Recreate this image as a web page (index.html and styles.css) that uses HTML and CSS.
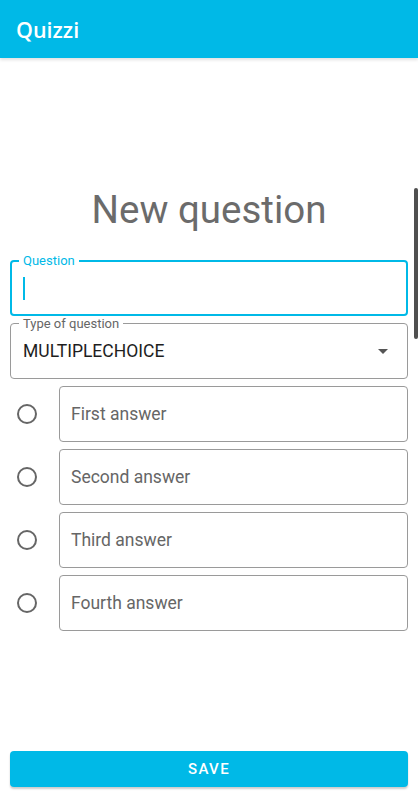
FILE: index.html
```html
<!DOCTYPE html>
<html lang="en">
<head>
  <meta charset="UTF-8" />
  <meta name="viewport" content="width=device-width, initial-scale=1.0" />
  <title>Quizzi</title>
  <link rel="stylesheet" href="styles.css">
</head>
<body>
  <header class="appbar">Quizzi</header>
  <div class="scroll-thumb"></div>

  <main class="content">
    <h1 class="title">New question</h1>

    <div class="field field-focused">
      <span class="field-label">Question</span>
      <span class="cursor"></span>
    </div>

    <div class="field">
      <span class="field-label">Type of question</span>
      <span class="field-value">MULTIPLECHOICE</span>
      <span class="dropdown-arrow"></span>
    </div>

    <div class="answers">
      <div class="answer-row">
        <span class="radio"></span>
        <div class="field answer"><span class="placeholder">First answer</span></div>
      </div>
      <div class="answer-row">
        <span class="radio"></span>
        <div class="field answer"><span class="placeholder">Second answer</span></div>
      </div>
      <div class="answer-row">
        <span class="radio"></span>
        <div class="field answer"><span class="placeholder">Third answer</span></div>
      </div>
      <div class="answer-row">
        <span class="radio"></span>
        <div class="field answer"><span class="placeholder">Fourth answer</span></div>
      </div>
    </div>
  </main>

  <footer class="actions">
    <button class="save-btn" type="button">SAVE</button>
  </footer>
</body>
</html>
```

FILE: styles.css
```css
body {
  margin: 0;
  font-family: Roboto, "Noto Sans", sans-serif;
  background: #fff;
  min-height: 100vh;
  display: flex;
  flex-direction: column;
}
.appbar {
  height: 58px;
  box-sizing: border-box;
  padding: 16px 16px 0;
  background: #00b9e7;
  color: #fff;
  font-family: "Open Sans", "Noto Sans", sans-serif;
  font-weight: 600;
  font-size: 21.5px;
  line-height: 28px;
  box-shadow: 0 2px 3px rgba(0, 0, 0, 0.12);
}
.scroll-thumb {
  position: absolute;
  right: 0;
  top: 188px;
  width: 4px;
  height: 151px;
  background: #505050;
  border-radius: 2px;
}
.content {
  flex: 1;
  padding: 0 10px;
}
.title {
  margin: 131px 0 29px;
  text-align: center;
  font-weight: 400;
  font-size: 38.5px;
  line-height: 42px;
  color: #6b6b6b;
}
.field {
  position: relative;
  height: 56px;
  box-sizing: border-box;
  border: 1px solid #9a9a9a;
  border-radius: 4px;
  padding: 0 12px;
  display: flex;
  align-items: center;
  margin-bottom: 7px;
}
.field-focused {
  border: 2px solid #00b9e7;
  padding: 0 11px;
}
.field-label {
  position: absolute;
  left: 8px;
  top: -7px;
  padding: 0 4px;
  background: #fff;
  font-size: 13px;
  line-height: 14px;
  color: #666;
}
.field-focused .field-label {
  top: -8px;
  left: 7px;
  color: #00b9e7;
}
.cursor {
  width: 2px;
  height: 23px;
  background: #00b9e7;
}
.field-value {
  flex: 1;
  font-size: 17.5px;
  color: #1e1e1e;
}
.dropdown-arrow {
  width: 0;
  height: 0;
  margin-right: 7px;
  border-left: 5px solid transparent;
  border-right: 5px solid transparent;
  border-top: 5px solid #555;
}
.answers {
  display: flex;
  flex-direction: column;
  gap: 7px;
}
.answer-row {
  display: flex;
  align-items: center;
}
.radio {
  width: 16px;
  height: 16px;
  margin: 0 22px 0 7px;
  border: 2px solid #666;
  border-radius: 50%;
  flex-shrink: 0;
}
.answer {
  flex: 1;
  padding-left: 11px;
  margin-bottom: 0;
}
.placeholder {
  font-size: 17.5px;
  color: #666;
}
.actions {
  padding: 0 10px 13px;
}
.save-btn {
  width: 100%;
  height: 36px;
  border: none;
  border-radius: 4px;
  background: #00b9e7;
  color: #fff;
  font-family: Roboto, sans-serif;
  font-weight: 500;
  font-size: 15px;
  letter-spacing: 1.4px;
  box-shadow: 0 2px 2px rgba(0, 0, 0, 0.2);
  cursor: pointer;
}
```
